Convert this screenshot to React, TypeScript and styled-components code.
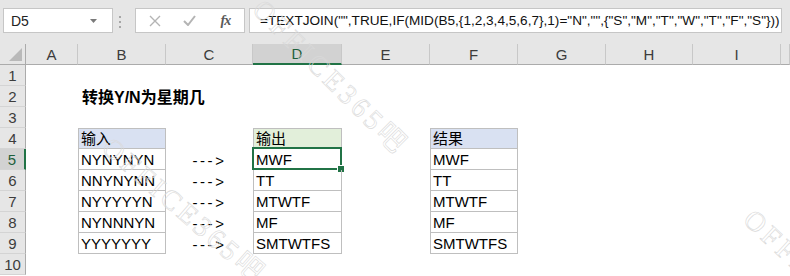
import { FC } from "react";
import styled, { createGlobalStyle, css } from "styled-components";

const GlobalStyle = createGlobalStyle`
  body {
    margin: 0;
    background: #ffffff;
    font-family: "Liberation Sans", "Noto Sans CJK SC", sans-serif;
  }
`;

const Frame = styled.div`
  position: relative;
  width: 790px;
  height: 276px;
  overflow: hidden;
  background: #ffffff;
`;

const TopBar = styled.div`
  display: flex;
  align-items: flex-start;
  height: 44px;
  box-sizing: border-box;
  padding: 8px 0 0 3px;
  background: #e6e6e6;
`;

const NameBox = styled.div`
  display: flex;
  align-items: center;
  justify-content: space-between;
  width: 110px;
  height: 25px;
  box-sizing: border-box;
  padding: 0 15px 0 7px;
  background: #ffffff;
  border: 1px solid #c6c6c6;
  font-size: 14px;
  color: #222;
`;

const Grip = styled.div`
  display: flex;
  flex-direction: column;
  gap: 3px;
  width: 22px;
  box-sizing: border-box;
  padding: 8px 0 0 6px;

  span {
    width: 2px;
    height: 2px;
    background: #a6a6a6;
  }
`;

const ToolBox = styled.div`
  display: flex;
  align-items: center;
  width: 110px;
  height: 25px;
  box-sizing: border-box;
  padding: 0 1px;
  background: #ffffff;
  border: 1px solid #c6c6c6;
`;

const IconSlot = styled.div`
  display: flex;
  align-items: center;
  justify-content: center;
  width: 36px;
  height: 100%;
`;

const FxText = styled.span`
  font-family: "Liberation Serif", serif;
  font-style: italic;
  font-weight: bold;
  font-size: 14px;
  color: #5a5a5a;
  letter-spacing: -1px;
`;

const FormulaBox = styled.div`
  display: flex;
  align-items: center;
  width: 533px;
  height: 25px;
  margin-left: 4px;
  box-sizing: border-box;
  padding-left: 10px;
  background: #ffffff;
  border: 1px solid #c6c6c6;
  font-size: 13.6px;
  color: #111;
  white-space: nowrap;
  overflow: hidden;
`;

const Sheet = styled.div`
  display: grid;
  grid-template-columns: 26px 52px 88px 87px 89px 88px 88px 88px 87px 88px 1fr;
  grid-auto-rows: 21px;
`;

const headText = css`
  display: flex;
  align-items: flex-end;
  justify-content: center;
  box-sizing: border-box;
  font-size: 15px;
  line-height: 18px;
  color: #3c3c3c;
`;

const Corner = styled.div`
  display: flex;
  align-items: flex-end;
  justify-content: flex-end;
  box-sizing: border-box;
  padding: 0 3px 3px 0;
  background: #e6e6e6;
  border-right: 1px solid #ababab;
  border-bottom: 1px solid #ababab;
`;

const ColHead = styled.div<{ $selected?: boolean }>`
  ${headText};
  background: ${(p) => (p.$selected ? "#d2d2d2" : "#e6e6e6")};
  border-right: 1px solid #c8c8c8;
  border-bottom: ${(p) => (p.$selected ? "2px solid #217346" : "1px solid #ababab")};
  color: ${(p) => (p.$selected ? "#1e5f3c" : "#3c3c3c")};
`;

const RowHead = styled.div<{ $selected?: boolean }>`
  ${headText};
  background: ${(p) => (p.$selected ? "#d2d2d2" : "#e6e6e6")};
  border-bottom: 1px solid #d4d4d4;
  border-right: ${(p) => (p.$selected ? "2px solid #217346" : "1px solid #ababab")};
  color: ${(p) => (p.$selected ? "#1e5f3c" : "#3c3c3c")};
`;

type Box = "none" | "head" | "body";

const Cell = styled.div<{ $box?: Box; $fill?: string; $center?: boolean; $title?: boolean; $arrow?: boolean }>`
  position: relative;
  display: flex;
  align-items: flex-end;
  justify-content: ${(p) => (p.$center ? "center" : "flex-start")};
  box-sizing: border-box;
  padding: 0 2px;
  font-size: 15px;
  line-height: 18px;
  color: #000;
  white-space: nowrap;
  background: ${(p) => p.$fill ?? "transparent"};
  ${(p) =>
    p.$box && p.$box !== "none" &&
    css`
      border-left: 1px solid #bfbfbf;
      border-right: 1px solid #bfbfbf;
      border-bottom: 1px solid #bfbfbf;
    `}
  ${(p) => p.$box === "head" && css`border-top: 1px solid #bfbfbf;`}
  ${(p) =>
    p.$title &&
    css`
      padding-left: 4px;
      font-size: 16px;
      font-weight: bold;
      z-index: 1;
    `}
  ${(p) => p.$arrow && css`letter-spacing: 2.6px;`}
`;

const Selection = styled.div`
  position: absolute;
  inset: -2px -1px -1px -2px;
  border: 2px solid #217346;
  pointer-events: none;
`;

const Handle = styled.div`
  position: absolute;
  right: -5px;
  bottom: -5px;
  width: 6px;
  height: 6px;
  background: #217346;
  border: 1px solid #ffffff;
`;

const Mark = styled.span<{ $left: number; $top: number; $angle: number }>`
  position: absolute;
  left: ${(p) => p.$left}px;
  top: ${(p) => p.$top}px;
  transform: rotate(${(p) => p.$angle}deg);
  transform-origin: 0 0;
  font-family: "Liberation Serif", "Noto Sans CJK SC", serif;
  font-size: 28px;
  line-height: 30px;
  letter-spacing: 4px;
  color: transparent;
  -webkit-text-stroke: 0.6px #d9d9d9;
  white-space: nowrap;
  pointer-events: none;
`;

const columns = ["A", "B", "C", "D", "E", "F", "G", "H", "I", ""];
const inputs = ["NYNYNYN", "NNYNYNN", "NYYYYYN", "NYNNNYN", "YYYYYYY"];
const outputs = ["MWF", "TT", "MTWTF", "MF", "SMTWTFS"];

const renderCell = (row: number, col: string) => {
  const key = `${col}${row}`;
  if (row === 2 && col === "B") {
    return (
      <Cell key={key} $title>
        转换Y/N为星期几
      </Cell>
    );
  }
  if (row === 4) {
    if (col === "B") return <Cell key={key} $box="head" $fill="#d9e1f2">输入</Cell>;
    if (col === "D") return <Cell key={key} $box="head" $fill="#e2efda">输出</Cell>;
    if (col === "F") return <Cell key={key} $box="head" $fill="#d9e1f2">结果</Cell>;
  }
  if (row >= 5 && row <= 9) {
    const i = row - 5;
    if (col === "B") return <Cell key={key} $box="body">{inputs[i]}</Cell>;
    if (col === "C") return <Cell key={key} $center $arrow>---&gt;</Cell>;
    if (col === "D")
      return (
        <Cell key={key} $box="body">
          {outputs[i]}
          {row === 5 && (
            <Selection>
              <Handle />
            </Selection>
          )}
        </Cell>
      );
    if (col === "F") return <Cell key={key} $box="body">{outputs[i]}</Cell>;
  }
  return <Cell key={key} />;
};

const App: FC = () => {
  const rows = Array.from({ length: 10 }, (_, i) => i + 1);

  return (
    <Frame>
      <GlobalStyle />
      <TopBar>
        <NameBox>
          D5
          <svg width="7" height="4" viewBox="0 0 7 4">
            <path d="M0 0h7L3.5 4z" fill="#7a7a7a" />
          </svg>
        </NameBox>
        <Grip>
          <span />
          <span />
          <span />
        </Grip>
        <ToolBox>
          <IconSlot>
            <svg width="12" height="12" viewBox="0 0 12 12">
              <path d="M1 1l10 10M11 1L1 11" stroke="#b4b4b4" strokeWidth="1.4" />
            </svg>
          </IconSlot>
          <IconSlot>
            <svg width="13" height="11" viewBox="0 0 13 11">
              <path d="M1 6l4 4 7-9" stroke="#b4b4b4" strokeWidth="2" fill="none" />
            </svg>
          </IconSlot>
          <IconSlot>
            <FxText>fx</FxText>
          </IconSlot>
        </ToolBox>
        <FormulaBox>
          =TEXTJOIN("",TRUE,IF(MID(B5,{"{1,2,3,4,5,6,7}"},1)="N","",{'{"S","M","T","W","T","F","S"}'}))
        </FormulaBox>
      </TopBar>
      <Sheet>
        <Corner>
          <svg width="13" height="13" viewBox="0 0 13 13">
            <path d="M13 0v13H0z" fill="#b9b9b9" />
          </svg>
        </Corner>
        {columns.map((c, i) => (
          <ColHead key={`h${i}`} $selected={c === "D"}>
            {c}
          </ColHead>
        ))}
        {rows.map((r) => [
          <RowHead key={`r${r}`} $selected={r === 5}>
            {r}
          </RowHead>,
          ...columns.map((c, i) => renderCell(r, c || `J${i}`)),
        ])}
      </Sheet>
      <Mark $left={268} $top={-6} $angle={45}>OFFICE365吧</Mark>
      <Mark $left={116} $top={132} $angle={41}>OFFICE365吧</Mark>
      <Mark $left={758} $top={204} $angle={43}>OFFICE365吧</Mark>
    </Frame>
  );
};

export default App;
